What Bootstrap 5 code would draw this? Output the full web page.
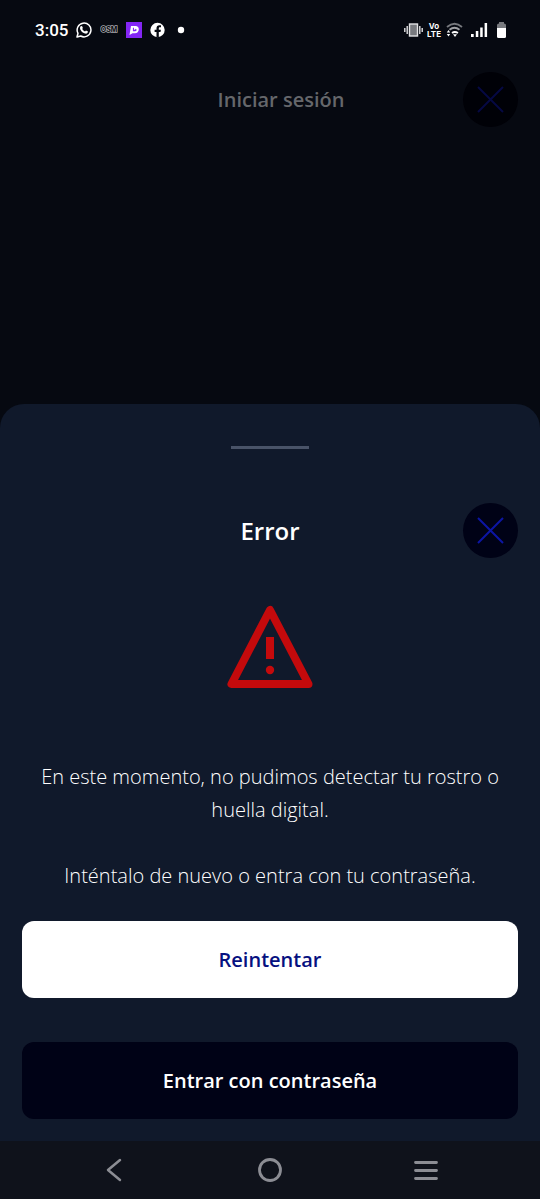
<!DOCTYPE html>
<html lang="es">
<head>
<meta charset="utf-8">
<meta name="viewport" content="width=device-width, initial-scale=1">
<title>Iniciar sesión</title>
<link href="https://cdn.jsdelivr.net/npm/bootstrap@5.3.0/dist/css/bootstrap.min.css" rel="stylesheet">
<style>
  body { background: #060911; color: #fff; font-family: "Open Sans", "Noto Sans", sans-serif; font-size: 20px; }
  svg { display: block; flex: none; }
  .status-bar { height: 59px; padding: 0 34px 0 35px; font: 500 17px/20px Roboto, sans-serif; }
  .title-row { display: grid; grid-template-columns: 55px 1fr 55px; align-items: center; padding: 0 22px; }
  .title-row > :nth-child(1) { grid-column: 2; }
  .title-row > .round-btn { grid-column: 3; }
  .page-header { margin-top: 13px; }
  .page-title { font-size: 20px; line-height: 28px; font-weight: 600; color: #65676b; }
  .page-header .page-title { padding-left: 22px; }
  .round-btn { width: 55px; height: 55px; background: #000216; color: #0c16a4; }
  .round-btn.dimmed { background: #000107; color: #050943; }
  .sheet { background: #10192b; border-radius: 24px 24px 0 0; padding-bottom: 22px; }
  .grabber { width: 78px; height: 3px; margin: 42px auto 54px; background: #495368; }
  .sheet-title { font-size: 24px; line-height: 32px; font-weight: 600; }
  .warning-icon { margin: 47px auto 71px; }
  .message { line-height: 33px; font-weight: 300; color: #fff; padding: 0 22px; }
  .actions { display: grid; gap: 44px; padding: 0 22px; margin-top: 29px; }
  .action-btn { height: 77px; border: 0; border-radius: 12px; font-size: 20px; line-height: 28px; font-weight: 600; }
  .action-main, .action-main:hover { background: #fff; color: #061080; }
  .action-alt, .action-alt:hover { background: #000216; color: #fff; }
  .system-nav { height: 58px; background: #0f121b; color: #8c8d94; padding: 0 36px; }
</style>
</head>
<body>
<div class="d-flex flex-column min-vh-100">
  <div class="status-bar d-flex align-items-center justify-content-between">
    <div class="d-flex align-items-center">
      <span>3:05</span>
      <!-- WhatsApp -->
      <svg class="ms-2" width="16" height="16" viewBox="0 0 16 16" fill="none" stroke="#fff" aria-hidden="true">
        <path d="M1 15l1-3.700A6.900 6.900 0 1 1 4.700 14z" stroke-width="1.500" stroke-linejoin="round"/>
        <path d="M4.700 4.200l1.300-.2.900 2-.7 1c.7 1.200 1.600 2 2.800 2.600l1-1 2 1c0 1.500-1.300 2.300-2.700 2C6.500 11 4 8.200 4 6c0-.8.300-1.400.7-1.800z" fill="#fff" stroke="none"/>
      </svg>
      <svg class="ms-2" width="18" height="10" viewBox="0 0 18 10" aria-hidden="true">
        <text x="9" y="7" text-anchor="middle" font-family="Inter, sans-serif" font-size="7" font-weight="700" fill="#05070e" stroke="#a5a6aa" stroke-width="1.500" paint-order="stroke">OSM</text>
      </svg>
      <svg class="ms-2" width="16" height="16" viewBox="0 0 16 16" aria-hidden="true">
        <rect width="16" height="16" fill="#8426f5"/>
        <path d="M5 4h5c4.200.3 3.600 7.300-1 7.300H6.500L3.500 13 4.300 8z" fill="#fff"/>
        <path d="M6.900 5.700v3.600h2c2 0 2.200-2.300.7-2.600L9 7.700H8V5.700z" fill="#8426f5"/>
      </svg>
      <svg class="ms-2" width="16" height="16" viewBox="0 0 16 16" aria-hidden="true">
        <circle cx="7.500" cy="8" r="7.200" fill="#fff"/>
        <path d="M6.500 15.400V10H4.600V7.800h1.900V6.200c0-2 1.200-3 2.900-3l1.600.1v2h-1c-1 0-1.200.5-1.200 1.200v1.300h2.100L10.500 10H8.800v5.400z" fill="#060911"/>
      </svg>
      <svg class="ms-2" width="16" height="16" viewBox="0 0 16 16" aria-hidden="true"><circle cx="7" cy="8" r="3.200" fill="#fff"/></svg>
    </div>
    <div class="d-flex align-items-center gap-1">
      <!-- vibration -->
      <svg width="19" height="14" viewBox="0 0 19 14" fill="none" stroke="#e2e2e4" stroke-width="1.400" aria-hidden="true">
        <rect x="5.500" y="1" width="8" height="12" fill="#77797e"/>
        <path d="M3.200 3v8M15.800 3v8M.8 5v4M18.200 5v4"/>
      </svg>
      <svg width="15" height="16" viewBox="0 0 15 16" fill="#fff" font-family="Inter, sans-serif" font-weight="700" aria-hidden="true">
        <text x="7" y="7" text-anchor="middle" font-size="8">Vo</text>
        <text x="7" y="15" text-anchor="middle" font-size="8">LTE</text>
      </svg>
      <!-- Wi-Fi -->
      <svg width="17" height="16" viewBox="0 0 17 16" fill="none" stroke-width="1.800" aria-hidden="true">
        <path d="M1 5q7.500-6.500 15 0" stroke="#77797e"/>
        <path d="M3.500 7.800q5-4 10 0" stroke="#a0a1a5"/>
        <path d="M6 11q2.700-2 6 0" stroke="#fff"/>
        <path d="M7 12.200h4L9 15zM.8 10.500L2.500 8l1.700 2.500zM.8 12L2.500 14.500 4.200 12z" fill="#fff"/>
      </svg>
      <svg class="ms-1" width="18" height="16" viewBox="0 0 18 16" fill="#fff" aria-hidden="true">
        <path d="M0 12h2.700v3H0zM4.800 9h2.500v6H4.800zM9.200 5.500h2.500V15H9.200zM13.600 1h2.500v14h-2.500z"/>
      </svg>
      <svg class="ms-1" width="9" height="16" viewBox="0 0 9 16" aria-hidden="true">
        <path d="M0 6V3q0-1.500 2-1.500V0h5v1.500q2 0 2 1.500v3z" fill="#77797e"/>
        <path d="M0 6h9v8.500q0 1.500-1.500 1.500h-6Q0 16 0 14.500z" fill="#fff"/>
      </svg>
    </div>
  </div>

  <header class="page-header title-row">
    <h1 class="page-title text-center mb-0">Iniciar sesión</h1>
    <button type="button" class="round-btn dimmed btn border-0 rounded-circle p-0 d-grid" aria-label="Cerrar">
      <svg class="m-auto" width="27" height="27" viewBox="0 0 27 27" fill="none" stroke="currentColor" stroke-width="2"><path d="M1 1l25 25M26 1L1 26"/></svg>
    </button>
  </header>

  <main class="sheet mt-auto" role="dialog" aria-labelledby="sheetTitle">
    <div class="grabber"></div>
    <div class="title-row">
      <h2 class="sheet-title text-center mb-0" id="sheetTitle">Error</h2>
      <button type="button" class="round-btn btn border-0 rounded-circle p-0 d-grid" aria-label="Cerrar">
        <svg class="m-auto" width="27" height="27" viewBox="0 0 27 27" fill="none" stroke="currentColor" stroke-width="2"><path d="M1 1l25 25M26 1L1 26"/></svg>
      </button>
    </div>
    <svg class="warning-icon" width="86" height="84" viewBox="0 0 86 84" aria-hidden="true">
      <path d="M43 5L4.500 79h77z" fill="none" stroke="#c40a0c" stroke-width="8" stroke-linejoin="round"/>
      <path d="M39 32h8v22h-8z" fill="#c40a0c"/>
      <circle cx="43" cy="65" r="4.200" fill="#c40a0c"/>
    </svg>
    <div class="message text-center">
      <p class="mb-0">En este momento, no pudimos detectar tu rostro o huella digital.</p>
      <br>
      <p class="mb-0">Inténtalo de nuevo o entra con tu contraseña.</p>
    </div>
    <div class="actions">
      <button type="button" class="btn action-btn action-main">Reintentar</button>
      <button type="button" class="btn action-btn action-alt">Entrar con contraseña</button>
    </div>
  </main>

  <nav class="system-nav d-flex align-items-center justify-content-around" aria-label="Sistema">
    <button type="button" class="btn border-0 p-0 text-reset" aria-label="Atrás">
      <svg width="24" height="24" viewBox="0 0 24 24" fill="none" stroke="currentColor" stroke-width="2.500" stroke-linecap="round" stroke-linejoin="round"><path d="M18 2L6 12l12 10"/></svg>
    </button>
    <button type="button" class="btn border-0 p-0 text-reset" aria-label="Inicio">
      <svg width="24" height="24" viewBox="0 0 24 24" fill="none" stroke="currentColor" stroke-width="2.800"><circle cx="12" cy="12" r="10.500"/></svg>
    </button>
    <button type="button" class="btn border-0 p-0 text-reset" aria-label="Recientes">
      <svg width="24" height="24" viewBox="0 0 24 24" fill="none" stroke="currentColor" stroke-width="2.800" stroke-linecap="round"><path d="M1.500 4.500h21M1.500 12.500h21M1.500 20.500h21"/></svg>
    </button>
  </nav>
</div>
<script src="https://cdn.jsdelivr.net/npm/bootstrap@5.3.0/dist/js/bootstrap.bundle.min.js"></script>
</body>
</html>
